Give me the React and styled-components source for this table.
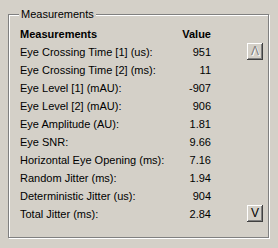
import React from "react";
import styled, { createGlobalStyle } from "styled-components";

const rows = [
  ["Eye Crossing Time [1] (us):", "951"],
  ["Eye Crossing Time [2] (ms):", "11"],
  ["Eye Level [1] (mAU):", "-907"],
  ["Eye Level [2] (mAU):", "906"],
  ["Eye Amplitude (AU):", "1.81"],
  ["Eye SNR:", "9.66"],
  ["Horizontal Eye Opening (ms):", "7.16"],
  ["Random Jitter (ms):", "1.94"],
  ["Deterministic Jitter (us):", "904"],
  ["Total Jitter (ms):", "2.84"],
];

const GlobalStyle = createGlobalStyle`
  html, body {
    margin: 0;
    padding: 0;
    background: #d4d0c8;
  }
  body {
    font-family: "Liberation Sans", Arial, sans-serif;
    font-size: 11px;
    color: #000;
  }
`;

const Panel = styled.div`
  width: 278px;
  height: 248px;
  padding: 14px 0 0 8px;
  box-sizing: border-box;
`;

// etched group box: grey line with a white line one pixel below/right
const Group = styled.div`
  position: relative;
  width: 261px;
  height: 224px;
  box-sizing: border-box;
  border: 1px solid #808080;
  box-shadow: inset 1px 1px 0 #fff, 1px 1px 0 #fff;
  padding: 10px 0 0 11px;
`;

const Legend = styled.span`
  position: absolute;
  top: -8px;
  left: 10px;
  padding: 0 2px;
  line-height: 14px;
  background: #d4d0c8;
`;

const Body = styled.div`
  display: flex;
`;

const Table = styled.div`
  display: grid;
  grid-template-columns: 160px 31px;
  grid-auto-rows: 18px;
  line-height: 18px;
`;

const Cell = styled.div`
  white-space: nowrap;
  text-align: ${(p) => (p.$num ? "right" : "left")};
  font-weight: ${(p) => (p.$head ? "bold" : "normal")};
`;

const Scroller = styled.div`
  display: flex;
  flex-direction: column;
  justify-content: space-between;
  margin-left: 36px;
  padding: 18px 0 1px;
`;

const Btn = styled.button`
  width: 16px;
  height: 17px;
  padding: 0;
  margin: 0;
  border: none;
  background: #d4d0c8;
  box-shadow: inset -1px -1px 0 #404040, inset 1px 1px 0 #fff,
    inset -2px -2px 0 #808080;
  font-family: "Liberation Sans", Arial, sans-serif;
  font-size: 12px;
  line-height: 15px;
  color: ${(p) => (p.disabled ? "#808080" : "#000")};
  text-shadow: ${(p) => (p.disabled ? "1px 1px 0 #fff" : "none")};
`;

export default function App() {
  return (
    <>
      <GlobalStyle />
      <Panel>
        <Group>
          <Legend>Measurements</Legend>
          <Body>
            <Table>
              <Cell $head>Measurements</Cell>
              <Cell $head $num>Value</Cell>
              {rows.map(([label, value]) => (
                <React.Fragment key={label}>
                  <Cell>{label}</Cell>
                  <Cell $num>{value}</Cell>
                </React.Fragment>
              ))}
            </Table>
            <Scroller>
              <Btn disabled>Λ</Btn>
              <Btn>V</Btn>
            </Scroller>
          </Body>
        </Group>
      </Panel>
    </>
  );
}
